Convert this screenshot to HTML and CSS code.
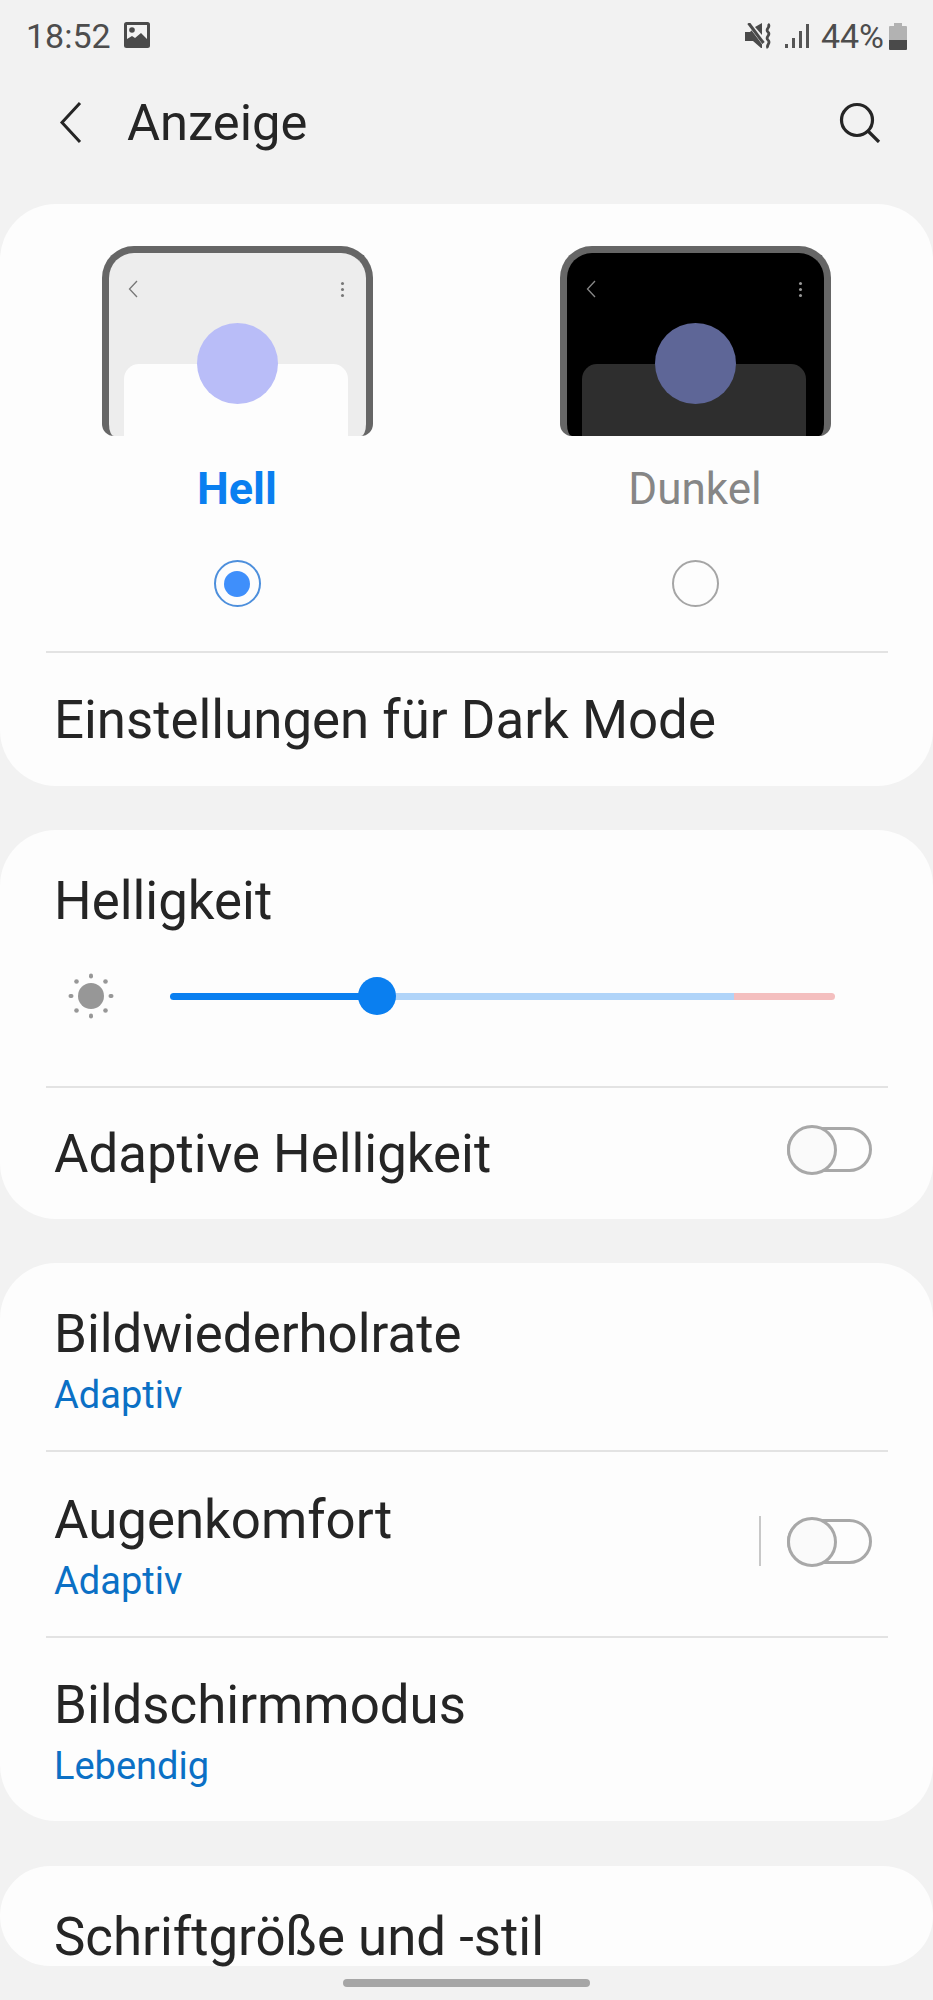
FILE: index.html
```html
<!DOCTYPE html>
<html lang="de">
<head>
    <meta charset="utf-8">
    <meta name="viewport" content="width=device-width, initial-scale=1.0">
    <title>Anzeige</title>
    <link rel="stylesheet" href="styles.css">
</head>
<body>
    <div id="page">
        <div class="status">
            <span class="status-time">18:52</span>
            <svg class="status-pic" width="26" height="26" viewBox="0 0 26 26">
                <rect width="26" height="26" rx="2.5" fill="#4a4a4a"/>
                <rect x="3" y="3" width="20" height="20" fill="#f2f2f2"/>
                <circle cx="8" cy="8" r="2.8" fill="#4a4a4a"/>
                <path d="M3 17l5-3 3 2 6-5 6 6v8H3z" fill="#4a4a4a"/>
            </svg>
            <span class="status-right">
                <svg width="27" height="26" viewBox="0 0 27 26">
                    <path d="M0 9h5l2-2 10 10v8l-1 0-8-7H0z" fill="#4a4a4a"/>
                    <path d="M10 4l7-4v12z" fill="#4a4a4a"/>
                    <path d="M3 1l15 20" stroke="#f2f2f2" stroke-width="2"/>
                    <path d="M3.500 0l15 20" stroke="#4a4a4a" stroke-width="3"/>
                    <path d="M23 1c3.500 3-3.500 5 0 8s-3.500 5 0 8-2.500 5 0 8" fill="none" stroke="#4a4a4a" stroke-width="2.800"/>
                </svg>
                <svg class="status-signal" width="24" height="26" viewBox="0 0 24 26">
                    <rect x="0" y="21" width="3" height="4" fill="#555"/>
                    <rect x="7" y="15" width="3" height="10" fill="#555"/>
                    <rect x="14" y="8" width="3" height="17" fill="#555"/>
                    <rect x="21" y="1" width="3" height="24" fill="#555"/>
                </svg>
                <span class="status-pct">44%</span>
                <svg width="18" height="27" viewBox="0 0 18 27">
                    <path d="M5 0h8v3h4a1 1 0 0 1 1 1v13H0V4a1 1 0 0 1 1-1h4z" fill="#b2b2b2"/>
                    <path d="M0 17h18v9a1 1 0 0 1-1 1H1a1 1 0 0 1-1-1z" fill="#4a4a4a"/>
                </svg>
            </span>
        </div>

        <div class="appbar">
            <svg class="appbar-back" width="23" height="43" viewBox="0 0 23 43">
                <path d="M21 2L3 21.500 21 41" fill="none" stroke="#252525" stroke-width="3"/>
            </svg>
            <h1>Anzeige</h1>
            <svg class="appbar-search" width="42" height="41" viewBox="0 0 42 41">
                <circle cx="18" cy="18" r="15.500" fill="none" stroke="#252525" stroke-width="3.200"/>
                <path d="M29 29l11 11" stroke="#252525" stroke-width="3.200"/>
            </svg>
        </div>

        <div class="cards">
            <section class="card card-mode">
                <div class="modes">
                    <div class="mode">
                        <div class="frame frame-light">
                            <svg class="frame-back" width="10" height="18" viewBox="0 0 10 18">
                                <path d="M9 1L1.500 9 9 17" fill="none" stroke="#777" stroke-width="1.300"/>
                            </svg>
                            <span class="frame-dots"><i></i><i></i><i></i></span>
                            <div class="frame-panel"></div>
                            <div class="frame-circle"></div>
                        </div>
                        <div class="mode-label mode-label-on">Hell</div>
                        <div class="radio radio-on"><i></i></div>
                    </div>
                    <div class="mode">
                        <div class="frame frame-dark">
                            <svg class="frame-back" width="10" height="18" viewBox="0 0 10 18">
                                <path d="M9 1L1.500 9 9 17" fill="none" stroke="#888" stroke-width="1.300"/>
                            </svg>
                            <span class="frame-dots"><i></i><i></i><i></i></span>
                            <div class="frame-panel"></div>
                            <div class="frame-circle"></div>
                        </div>
                        <div class="mode-label">Dunkel</div>
                        <div class="radio"></div>
                    </div>
                </div>
                <div class="divider"></div>
                <div class="row row-dark">
                    <span class="title">Einstellungen für Dark Mode</span>
                </div>
            </section>

            <section class="card card-bright">
                <div class="title bright-title">Helligkeit</div>
                <div class="slider">
                    <svg class="sun" width="46" height="46" viewBox="0 0 46 46" fill="#979797">
                        <circle cx="23" cy="23" r="13"/>
                        <rect x="21" y="0.500" width="4" height="5" rx="2"/>
                        <rect x="21" y="40.500" width="4" height="5" rx="2"/>
                        <rect x="0.500" y="21" width="5" height="4" rx="2"/>
                        <rect x="40.500" y="21" width="5" height="4" rx="2"/>
                        <circle cx="8.500" cy="8.500" r="2.300"/>
                        <circle cx="37.500" cy="8.500" r="2.300"/>
                        <circle cx="8.500" cy="37.500" r="2.300"/>
                        <circle cx="37.500" cy="37.500" r="2.300"/>
                    </svg>
                    <div class="track">
                        <span class="track-done"></span>
                        <span class="track-rest"></span>
                        <span class="track-high"></span>
                        <span class="thumb"></span>
                    </div>
                </div>
                <div class="divider"></div>
                <div class="row row-adaptive">
                    <span class="title">Adaptive Helligkeit</span>
                    <span class="toggle toggle-lift"><i></i></span>
                </div>
            </section>

            <section class="card card-list">
                <div class="item">
                    <div>
                        <div class="title">Bildwiederholrate</div>
                        <div class="sub">Adaptiv</div>
                    </div>
                </div>
                <div class="divider"></div>
                <div class="item">
                    <div>
                        <div class="title">Augenkomfort</div>
                        <div class="sub">Adaptiv</div>
                    </div>
                    <div class="item-end">
                        <span class="vline"></span>
                        <span class="toggle"><i></i></span>
                    </div>
                </div>
                <div class="divider"></div>
                <div class="item">
                    <div>
                        <div class="title">Bildschirmmodus</div>
                        <div class="sub">Lebendig</div>
                    </div>
                </div>
            </section>

            <section class="card card-last">
                <div class="title">Schriftgröße und -stil</div>
            </section>
        </div>

        <div class="home"><span></span></div>
    </div>
</body>
</html>
```

FILE: styles.css
```css
html, body {
    margin: 0;
    height: 2000px;
    overflow: hidden;
}
body {
    font-family: Roboto, sans-serif;
    color: #252525;
    background: #f2f2f2;
}
#page {
    width: 933px;
}
.status {
    display: flex;
    align-items: center;
    height: 72px;
    padding: 0 26px 0 26px;
    color: #4d4d4d;
    font-size: 34px;
}
.status-pic {
    margin-left: 13px;
    margin-top: -2px;
}
.status-right {
    display: flex;
    align-items: center;
    margin-left: auto;
}
.status-signal {
    margin-left: 13px;
}
.status-pct {
    margin-left: 12px;
    margin-right: 5px;
}
.appbar {
    display: flex;
    align-items: center;
    height: 100px;
    padding: 0 52px 32px 59px;
}
.appbar h1 {
    margin: 0 0 0 45px;
    font-size: 50.700px;
    font-weight: normal;
}
.appbar-search {
    margin-left: auto;
}
.card {
    background: #fdfdfd;
    border-radius: 56px;
}
.card-mode {
    height: 582px;
    margin-bottom: 44px;
    padding-top: 42px;
    box-sizing: border-box;
}
.card-bright {
    height: 389px;
    margin-bottom: 44px;
    padding-top: 41px;
    box-sizing: border-box;
}
.card-list {
    height: 558px;
    margin-bottom: 45px;
}
.card-last {
    height: 100px;
    padding: 41px 54px 0;
    box-sizing: border-box;
    border-radius: 50px;
}
.title {
    font-size: 52.800px;
    line-height: 60px;
}
.sub {
    margin-top: 6px;
    font-size: 38px;
    line-height: 50px;
    color: #0b70c5;
}
.divider {
    height: 2px;
    margin: 0 45px 0 46px;
    background: #e3e3e3;
}
.modes {
    display: grid;
    grid-template-columns: 458px 458px;
    padding: 0 9px 0 8px;
    justify-items: center;
}
.mode {
    display: flex;
    flex-direction: column;
    align-items: center;
}
.frame {
    position: relative;
    width: 271px;
    height: 190px;
    box-sizing: border-box;
    border: 7px solid #666;
    border-bottom: 0;
    border-radius: 32px 32px 12px 12px;
    overflow: hidden;
}
.frame-light {
    background: #ededed;
}
.frame-dark {
    background: #000;
}
.frame-back {
    position: absolute;
    left: 19px;
    top: 27px;
}
.frame-dots {
    position: absolute;
    right: 22px;
    top: 29px;
    display: flex;
    flex-direction: column;
    gap: 3px;
}
.frame-dots i {
    width: 3px;
    height: 3px;
    border-radius: 50%;
    background: #777;
}
.frame-dark .frame-dots i {
    background: #999;
}
.frame-panel {
    position: absolute;
    left: 15px;
    right: 18px;
    top: 111px;
    bottom: 0;
    border-radius: 15px 15px 0 0;
    background: #fdfdfd;
}
.frame-dark .frame-panel {
    background: #2e2e2e;
}
.frame-circle {
    position: absolute;
    left: 88px;
    top: 70px;
    width: 81px;
    height: 81px;
    border-radius: 50%;
    background: #b9bdf8;
}
.frame-dark .frame-circle {
    background: #5e6697;
}
.mode-label {
    margin-top: 28px;
    font-size: 44px;
    line-height: 50px;
    color: #868686;
}
.mode-label-on {
    font-size: 45px;
    font-weight: bold;
    color: #0a7ff0;
}
.radio {
    display: flex;
    align-items: center;
    justify-content: center;
    width: 47px;
    height: 47px;
    margin: 46px 0 44px;
    box-sizing: border-box;
    border: 2.500px solid #a5a5a5;
    border-radius: 50%;
}
.radio-on {
    border-color: #4d8fdc;
}
.radio i {
    width: 26px;
    height: 26px;
    border-radius: 50%;
    background: #3f8ffb;
}
.row {
    display: flex;
    align-items: center;
    justify-content: space-between;
    padding: 0 61px 0 54px;
}
.row-dark {
    height: 134px;
}
.row-adaptive {
    height: 131px;
}
.bright-title {
    padding-left: 54px;
}
.slider {
    display: flex;
    align-items: center;
    height: 40px;
    margin: 45px 0 70px;
    padding-left: 68px;
}
.sun {
    margin-right: 56px;
}
.track {
    position: relative;
    display: flex;
    width: 665px;
    height: 7px;
}
.track-done {
    width: 207px;
    background: #0a7ff0;
    border-radius: 4px 0 0 4px;
}
.track-rest {
    width: 357px;
    background: #b0d4f9;
}
.track-high {
    width: 101px;
    background: #f4bfbf;
    border-radius: 0 4px 4px 0;
}
.thumb {
    position: absolute;
    left: 188px;
    top: -16px;
    width: 38px;
    height: 38px;
    border-radius: 50%;
    background: #0a7ff0;
}
.toggle {
    position: relative;
    display: block;
    width: 85px;
    height: 45px;
    box-sizing: border-box;
    border: 3px solid #a8a8a8;
    border-radius: 23px;
}
.toggle i {
    position: absolute;
    left: -3px;
    top: -5px;
    width: 50px;
    height: 50px;
    box-sizing: border-box;
    border: 3px solid #a8a8a8;
    border-radius: 50%;
    background: #fafafa;
}
.toggle-lift {
    margin-bottom: 8px;
}
.item {
    display: flex;
    justify-content: space-between;
    padding: 38px 61px 30px 54px;
}
.item:first-child {
    padding-top: 41px;
}
.item:last-child {
    padding-top: 37px;
    padding-bottom: 29px;
}
.item-end {
    display: flex;
    align-items: center;
    gap: 26px;
    height: 50px;
    margin-top: 26px;
}
.vline {
    width: 2px;
    height: 50px;
    background: #c8c8c8;
}
.home {
    display: flex;
    justify-content: center;
    padding-top: 13px;
}
.home span {
    width: 247px;
    height: 8px;
    border-radius: 4px;
    background: #a6a6a6;
}
```
